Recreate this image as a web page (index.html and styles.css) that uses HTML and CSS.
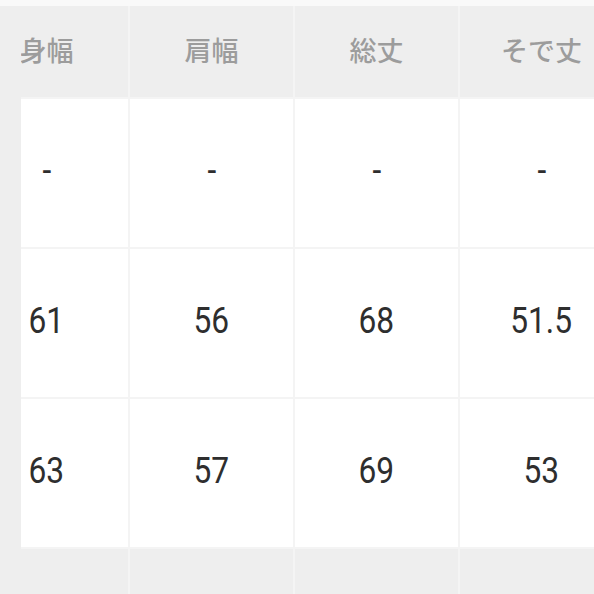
FILE: index.html
```html
<!DOCTYPE html>
<html lang="ja">
<head>
<meta charset="utf-8">
<link rel="stylesheet" href="styles.css">
</head>
<body>
<div class="page">
  <div class="topbar"></div>
  <div class="body">
    <div class="stub"></div>
    <div class="viewport">
      <div class="grid">
        <div class="cell head">身幅</div>
        <div class="cell head">肩幅</div>
        <div class="cell head">総丈</div>
        <div class="cell head">そで丈</div>

        <div class="cell val"><span class="num">-</span></div>
        <div class="cell val"><span class="num">-</span></div>
        <div class="cell val"><span class="num">-</span></div>
        <div class="cell val"><span class="num">-</span></div>

        <div class="cell val"><span class="num">61</span></div>
        <div class="cell val"><span class="num">56</span></div>
        <div class="cell val"><span class="num">68</span></div>
        <div class="cell val"><span class="num">51.5</span></div>

        <div class="cell val"><span class="num">63</span></div>
        <div class="cell val"><span class="num">57</span></div>
        <div class="cell val"><span class="num">69</span></div>
        <div class="cell val"><span class="num">53</span></div>

        <div class="cell foot"></div>
        <div class="cell foot"></div>
        <div class="cell foot"></div>
        <div class="cell foot"></div>
      </div>
    </div>
  </div>
</div>
</body>
</html>
```
FILE: styles.css
```css
html, body {
  margin: 0;
  padding: 0;
  background: #f9f9f9;
}
.page {
  width: 594px;
  height: 594px;
  overflow: hidden;
  display: flex;
  flex-direction: column;
}
.topbar {
  height: 6px;
  background: #f9f9f9;
  flex: none;
}
.body {
  display: flex;
  flex: 1;
  min-height: 0;
}
.stub {
  width: 21px;
  flex: none;
  background: #eeeeee;
}
.viewport {
  flex: 1;
  overflow: hidden;
  background: #f4f4f4;
}
.grid {
  margin-left: -56px;
  display: grid;
  grid-template-columns: repeat(4, 163px);
  grid-template-rows: 91px 148px 148px 148px 60px;
  gap: 2px;
  background: #f4f4f4;
  width: max-content;
}
.cell {
  display: flex;
  align-items: center;
  justify-content: center;
  box-sizing: border-box;
}
.head {
  background: #eeeeee;
  color: #9c9c9c;
  font-family: "Noto Sans CJK JP", sans-serif;
  font-weight: 500;
  font-size: 27px;
  padding-bottom: 4px;
}
.val {
  background: #ffffff;
  color: #2e2e2e;
  font-family: Roboto, "Noto Sans", sans-serif;
  font-size: 36px;
  padding-bottom: 4px;
}
.num {
  display: inline-block;
  transform: scaleX(0.88);
}
.foot {
  background: #eeeeee;
}
```
